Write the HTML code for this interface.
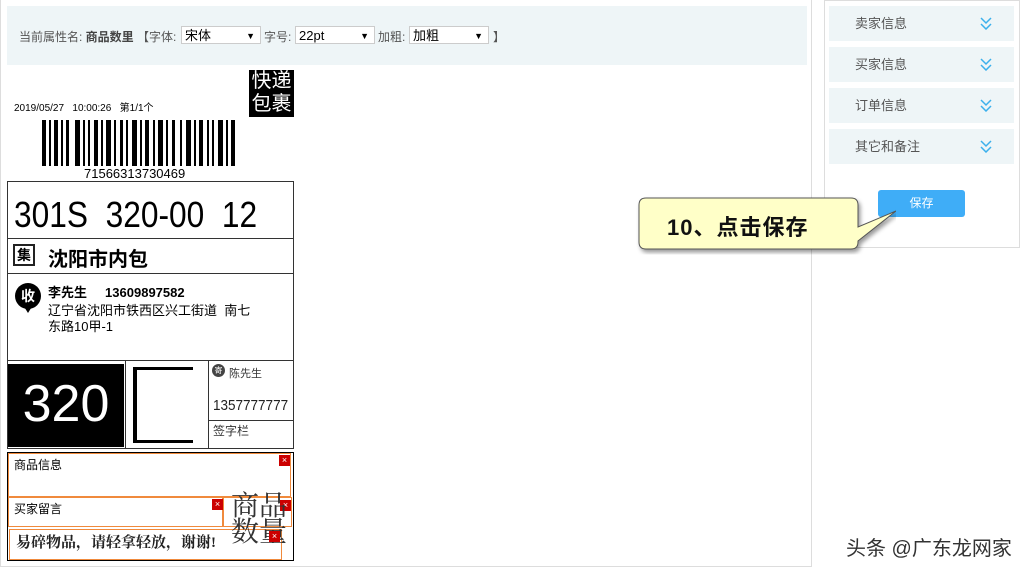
<!DOCTYPE html>
<html><head><meta charset="utf-8"><style>
body{margin:0;width:1026px;height:575px;background:#fff;position:relative;overflow:hidden;font-family:"Liberation Sans","Noto Sans CJK SC",sans-serif;}
.a{position:absolute;white-space:nowrap;}
.sel{position:absolute;top:26px;height:18px;border:1px solid #ccc;background:#fff;font-size:13px;line-height:18px;padding-left:3px;box-sizing:border-box;color:#000}
.sel:after{content:"▼";position:absolute;right:5px;font-size:9px;top:0}
.side{position:absolute;left:829px;width:185px;height:35px;background:#eef5f7;font-size:13px;color:#555;line-height:35px;}
.side span{position:absolute;left:26px}
.side svg{position:absolute;right:22px;top:11px}
.ob{position:absolute;border:1px solid #f08a3c;box-sizing:border-box;}
.x{position:absolute;width:9px;height:9px;background:#c00;border:1px solid #c00;color:#fff;font-size:9px;line-height:8px;text-align:center;}
</style></head><body>
<div class="a" style="left:0;top:0;width:812px;height:567px;border-right:1px solid #ddd;border-bottom:1px solid #ddd;border-left:1px solid #ddd;box-sizing:border-box"></div>
<div class="a" style="left:7px;top:6px;width:800px;height:59px;background:#eef5f7"></div>
<div class="a" style="left:19px;top:28px;font-size:12px;color:#555;">当前属性名: <b style="color:#444">商品数里</b> 【字体:</div>
<div class="sel" style="left:181px;width:80px">宋体</div>
<div class="a" style="left:264px;top:28px;font-size:12px;color:#555">字号:</div>
<div class="sel" style="left:295px;width:80px">22pt</div>
<div class="a" style="left:378px;top:28px;font-size:12px;color:#555">加粗:</div>
<div class="sel" style="left:409px;width:80px">加粗</div>
<div class="a" style="left:493px;top:28px;font-size:12px;color:#555">】</div>

<div class="a" style="left:249px;top:70px;width:45px;height:47px;background:#000;color:#fff;font-size:20px;line-height:23px;text-align:center">快递<br>包裹</div>
<div class="a" style="left:14px;top:99px;font-size:10px;color:#000">2019/05/27&nbsp;&nbsp; 10:00:26&nbsp;&nbsp; 第1/1个</div>
<svg class="a" style="left:42px;top:120px" width="196" height="46">
<g fill="#000">
<rect x="0" width="4" height="46"/><rect x="7" width="2" height="46"/><rect x="12" width="4" height="46"/><rect x="19" width="2" height="46"/><rect x="24" width="3" height="46"/><rect x="33" width="5" height="46"/><rect x="41" width="2" height="46"/><rect x="46" width="2" height="46"/><rect x="52" width="4" height="46"/><rect x="59" width="2" height="46"/><rect x="64" width="5" height="46"/><rect x="72" width="2" height="46"/><rect x="78" width="3" height="46"/><rect x="84" width="2" height="46"/><rect x="90" width="5" height="46"/><rect x="98" width="2" height="46"/><rect x="103" width="4" height="46"/><rect x="111" width="2" height="46"/><rect x="116" width="5" height="46"/><rect x="124" width="2" height="46"/><rect x="130" width="3" height="46"/><rect x="138" width="2" height="46"/><rect x="144" width="5" height="46"/><rect x="152" width="2" height="46"/><rect x="157" width="4" height="46"/><rect x="165" width="2" height="46"/><rect x="170" width="2" height="46"/><rect x="176" width="5" height="46"/><rect x="184" width="2" height="46"/><rect x="189" width="4" height="46"/>
</g></svg>
<div class="a" style="left:84px;top:166px;font-size:13px;">71566313730469</div>
<div class="a" style="left:7px;top:181px;width:287px;height:268px;border:1.5px solid #333;box-sizing:border-box"></div>
<div class="a" style="left:14px;top:195px;font-size:36px;line-height:40px;transform:scaleX(0.88);transform-origin:0 0">301S&nbsp; 320-00&nbsp; 12</div>
<div class="a" style="left:7px;top:238px;width:287px;border-top:1.5px solid #333"></div>
<div class="a" style="left:13px;top:244px;width:22px;height:22px;border:2px solid #222;box-sizing:border-box;font-size:14px;font-weight:bold;text-align:center;line-height:18px">集</div>
<div class="a" style="left:48px;top:243px;font-size:20px;font-weight:bold">沈阳市内包</div>
<div class="a" style="left:7px;top:273px;width:287px;border-top:1.5px solid #333"></div>
<div class="a" style="left:15px;top:283px;width:26px;height:26px;border-radius:50%;background:#000;color:#fff;font-size:14px;font-weight:bold;text-align:center;line-height:26px">收</div>
<div class="a" style="left:23px;top:305px;border-left:5px solid transparent;border-right:5px solid transparent;border-top:8px solid #000"></div>
<div class="a" style="left:48px;top:282px;font-size:13px;font-weight:bold">李先生&nbsp;&nbsp;&nbsp;&nbsp; 13609897582</div>
<div class="a" style="left:48px;top:303px;font-size:13px;line-height:16px">辽宁省沈阳市铁西区兴工街道&nbsp; 南七<br>东路10甲-1</div>
<div class="a" style="left:7px;top:360px;width:287px;border-top:1.5px solid #333"></div>
<div class="a" style="left:8px;top:364px;width:116px;height:83px;background:#000;color:#fff;font-size:52px;text-align:center;line-height:80px">320</div>
<div class="a" style="left:125px;top:360px;width:1px;height:88px;background:#333"></div>
<div class="a" style="left:208px;top:360px;width:1px;height:88px;background:#333"></div>
<div class="a" style="left:133px;top:367px;width:60px;height:76px;border-left:4px solid #000;border-top:3px solid #000;border-bottom:3px solid #000;box-sizing:border-box"></div>
<div class="a" style="left:140px;top:378px;width:60px;height:60px;background:#fff;border-radius:40%"></div>
<div class="a" style="left:212px;top:364px;width:13px;height:13px;border-radius:50%;background:#444;color:#fff;font-size:8px;text-align:center;line-height:13px">寄</div>
<div class="a" style="left:229px;top:365px;font-size:11px;color:#333">陈先生</div>
<div class="a" style="left:213px;top:397px;font-size:15px;color:#222;transform:scaleX(0.9);transform-origin:0 0">1357777777</div>
<div class="a" style="left:208px;top:420px;width:86px;border-top:1.5px solid #333"></div>
<div class="a" style="left:213px;top:422px;font-size:12px;color:#333">签字栏</div>

<div class="a" style="left:7px;top:452px;width:287px;height:109px;border:1.5px solid #000;box-sizing:border-box"></div>
<div class="ob" style="left:8px;top:453px;width:283px;height:44px"></div>
<div class="a" style="left:14px;top:456px;font-size:12px">商品信息</div>
<div class="x" style="left:279px;top:455px">×</div>
<div class="ob" style="left:8px;top:497px;width:215px;height:30px"></div>
<div class="a" style="left:14px;top:500px;font-size:12px">买家留言</div>
<div class="x" style="left:212px;top:499px">×</div>
<div class="ob" style="left:223px;top:497px;width:69px;height:30px"></div>
<div class="x" style="left:280px;top:500px">×</div>
<div class="ob" style="left:9px;top:529px;width:273px;height:31px"></div>
<div class="a" style="left:16px;top:531px;font-size:15px;font-weight:bold;color:#222;font-family:'Liberation Serif','Noto Serif CJK SC',serif">易碎物品，请轻拿轻放，谢谢!</div>
<div class="a" style="left:231px;top:494px;font-size:28px;line-height:26px;color:#333;font-family:'Liberation Serif','Noto Serif CJK SC',serif">商品<br>数量</div>
<div class="x" style="left:269px;top:531px">×</div>

<div class="a" style="left:824px;top:0;width:196px;height:248px;border:1px solid #ddd;box-sizing:border-box"></div>
<div class="side" style="top:6px"><span>卖家信息</span><svg width="12" height="13"><path d="M1 1l5 5 5-5M1 7l5 5 5-5" fill="none" stroke="#3bb0ec" stroke-width="1.5"/></svg></div>
<div class="side" style="top:47px"><span>买家信息</span><svg width="12" height="13"><path d="M1 1l5 5 5-5M1 7l5 5 5-5" fill="none" stroke="#3bb0ec" stroke-width="1.5"/></svg></div>
<div class="side" style="top:88px"><span>订单信息</span><svg width="12" height="13"><path d="M1 1l5 5 5-5M1 7l5 5 5-5" fill="none" stroke="#3bb0ec" stroke-width="1.5"/></svg></div>
<div class="side" style="top:129px"><span>其它和备注</span><svg width="12" height="13"><path d="M1 1l5 5 5-5M1 7l5 5 5-5" fill="none" stroke="#3bb0ec" stroke-width="1.5"/></svg></div>
<div class="a" style="left:878px;top:190px;width:87px;height:27px;background:#3fadf7;border-radius:3px;color:#fff;font-size:12px;text-align:center;line-height:27px">保存</div>

<svg class="a" style="left:636px;top:195px" width="260" height="60">
<defs><filter id="s"><feDropShadow dx="2" dy="3" stdDeviation="2" flood-opacity="0.4"/></filter></defs>
<path d="M10 3H215Q222 3 222 10V32L260 16L222 46V47Q222 54 215 54H10Q3 54 3 47V10Q3 3 10 3Z" fill="#ffffc8" stroke="#555" stroke-width="1" filter="url(#s)"/>
</svg>
<div class="a" style="left:667px;top:210px;font-size:22px;font-weight:bold;letter-spacing:1px;color:#111">10、点击保存</div>

<div class="a" style="left:846px;top:532px;font-size:20px;color:#333">头条 @广东龙网家</div>
</body></html>
